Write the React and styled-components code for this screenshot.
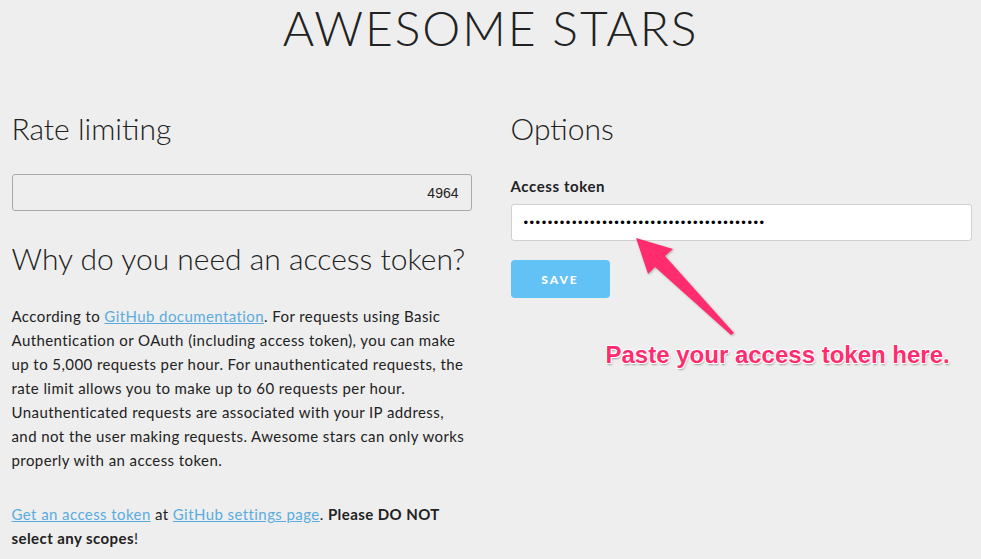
import styled, { createGlobalStyle } from "styled-components";

const GlobalStyle = createGlobalStyle`
  html, body {
    margin: 0;
    padding: 0;
    background: #eeeeee;
  }
  body {
    font-family: "Lato", "Open Sans", sans-serif;
    color: #222;
  }
`;

const App = () => {
  return (
    <Page>
      <GlobalStyle />
      <Title>AWESOME STARS</Title>
      <Columns>
        <Column>
          <Heading>Rate limiting</Heading>
          <RateBox>4964</RateBox>
          <Heading $top={27}>Why do you need an access token?</Heading>
          <Text $top={26}>
            According to <Link href="#">GitHub documentation</Link>. For
            requests using Basic Authentication or OAuth (including access
            token), you can make up to 5,000 requests per hour. For
            unauthenticated requests, the rate limit allows you to make up to
            60 requests per hour. Unauthenticated requests are associated with
            your IP address, and not the user making requests. Awesome stars
            can only works properly with an access token.
          </Text>
          <Text $top={30}>
            <Link href="#">Get an access token</Link> at{" "}
            <Link href="#">GitHub settings page</Link>.{" "}
            <b>Please DO NOT select any scopes</b>!
          </Text>
        </Column>
        <Column>
          <Heading>Options</Heading>
          <Label>Access token</Label>
          <TokenInput
            type="password"
            readOnly
            value="........................................"
          />
          <SaveButton>SAVE</SaveButton>
          <Callout>
            <Arrow width="120" height="110" viewBox="0 0 120 110">
              <polygon
                points="1,1 38,12 30,19 99,96 96,98 20,30 13,37"
                fill="#ff2d6f"
              />
            </Arrow>
            <CalloutText>Paste your access token here.</CalloutText>
          </Callout>
        </Column>
      </Columns>
    </Page>
  );
};

const Page = styled.div`
  min-height: 559px;
`;

const Title = styled.h1`
  margin: 0;
  padding-top: 0;
  text-align: center;
  font-family: "Lato", sans-serif;
  font-weight: 300;
  font-size: 48px;
  line-height: 56px;
  letter-spacing: 1.9px;
  color: #222;
`;

const Columns = styled.div`
  width: 960px;
  margin: 0 auto;
  padding-top: 52px;
  display: grid;
  grid-template-columns: 460px 460px;
  column-gap: 39px;
  padding-left: 2px;
`;

const Column = styled.div`
  display: flex;
  flex-direction: column;
  align-items: flex-start;
`;

const Heading = styled.h2`
  margin: ${(p) => p.$top || 0}px 0 0;
  font-family: "Lato", sans-serif;
  font-weight: 300;
  font-size: 30px;
  line-height: 40px;
  white-space: nowrap;
  color: #222;
`;

const RateBox = styled.div`
  box-sizing: border-box;
  width: 460px;
  height: 37px;
  margin-top: 26px;
  border: 1px solid #aaa;
  border-radius: 3px;
  padding: 0 12px;
  display: flex;
  align-items: center;
  justify-content: flex-end;
  font-family: "Liberation Sans", Arial, sans-serif;
  font-size: 14px;
  color: #222;
`;

const Text = styled.p`
  margin: ${(p) => p.$top || 20}px 0 0;
  font-family: "Lato", sans-serif;
  font-size: 15px;
  line-height: 24px;
  letter-spacing: 0.42px;
  color: #222;
  b {
    font-weight: 700;
  }
`;

const Link = styled.a`
  color: #5aacdf;
  text-decoration: underline;
`;

const Label = styled.label`
  margin-top: 27px;
  font-family: "Lato", sans-serif;
  font-weight: 700;
  font-size: 15px;
  line-height: 22px;
  letter-spacing: 0.6px;
  color: #222;
`;

const TokenInput = styled.input`
  box-sizing: border-box;
  width: 461px;
  height: 37px;
  margin-top: 7px;
  padding: 0 12px;
  border: 1px solid #d0d0d0;
  border-radius: 3px;
  background: #fff;
  font-family: "Liberation Sans", Arial, sans-serif;
  font-size: 13px;
  letter-spacing: 1.5px;
  color: #000;
  outline: none;
`;

const SaveButton = styled.button`
  margin-top: 19px;
  width: 99px;
  height: 38px;
  border: none;
  border-radius: 4px;
  background: #62c1f5;
  color: #fff;
  font-family: "Lato", sans-serif;
  font-weight: 900;
  font-size: 12px;
  letter-spacing: 2px;
`;

const Callout = styled.div`
  position: relative;
  width: 100%;
  height: 80px;
`;

const Arrow = styled.svg`
  position: absolute;
  left: 124px;
  top: -61px;
  filter: drop-shadow(1px 1px 1px rgba(0, 0, 0, 0.25));
`;

const CalloutText = styled.div`
  position: absolute;
  left: 95px;
  top: 43px;
  font-family: "Liberation Sans", Arial, sans-serif;
  font-weight: 700;
  font-size: 24px;
  color: #ff2d6f;
  white-space: nowrap;
  text-shadow: -1px -1px 0 #fff, 1px -1px 0 #fff, -1px 1px 0 #fff,
    1px 1px 0 #fff, 1px 2px 2px rgba(0, 0, 0, 0.35);
`;

export default App;
